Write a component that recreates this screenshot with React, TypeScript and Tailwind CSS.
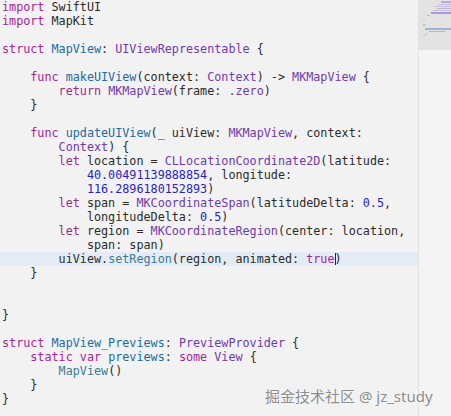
import React from 'react';

type Tok = [string, string?];

const K = 'text-[#a3278f]'; // keywords
const T = 'text-[#6f3bab]'; // types
const D = 'text-[#1e6a9e]'; // declarations
const F = 'text-[#3b7a93]'; // function / member calls
const N = 'text-[#2a1fc4]'; // numbers

const lines: { indent: number; toks: Tok[]; active?: boolean }[] = [
    { indent: 0, toks: [['import', K], [' SwiftUI']] },
    { indent: 0, toks: [['import', K], [' MapKit']] },
    { indent: 0, toks: [] },
    { indent: 0, toks: [['struct', K], [' '], ['MapView', D], [': '], ['UIViewRepresentable', T], [' {']] },
    { indent: 0, toks: [] },
    {
        indent: 4,
        toks: [['func', K], [' '], ['makeUIView', D], ['(context: '], ['Context', T], [') -> '], ['MKMapView', T], [' {']],
    },
    { indent: 8, toks: [['return', K], [' '], ['MKMapView', T], ['(frame: '], ['.zero', T], [')']] },
    { indent: 4, toks: [['}']] },
    { indent: 0, toks: [] },
    {
        indent: 4,
        toks: [['func', K], [' '], ['updateUIView', D], ['(_ uiView: '], ['MKMapView', T], [', context:']],
    },
    { indent: 8, toks: [['Context', T], [') {']] },
    { indent: 8, toks: [['let', K], [' location = '], ['CLLocationCoordinate2D', T], ['(latitude:']] },
    { indent: 12, toks: [['40.00491139888854', N], [', longitude:']] },
    { indent: 12, toks: [['116.2896180152893', N], [')']] },
    { indent: 8, toks: [['let', K], [' span = '], ['MKCoordinateSpan', T], ['(latitudeDelta: '], ['0.5', N], [',']] },
    { indent: 12, toks: [['longitudeDelta: '], ['0.5', N], [')']] },
    { indent: 8, toks: [['let', K], [' region = '], ['MKCoordinateRegion', T], ['(center: location,']] },
    { indent: 12, toks: [['span: span)']] },
    { indent: 8, toks: [['uiView.'], ['setRegion', F], ['(region, animated: '], ['true', K], ['|'], [')']], active: true },
    { indent: 4, toks: [['}']] },
    { indent: 0, toks: [] },
    { indent: 0, toks: [] },
    { indent: 0, toks: [['}']] },
    { indent: 0, toks: [] },
    { indent: 0, toks: [['struct', K], [' '], ['MapView_Previews', D], [': '], ['PreviewProvider', T], [' {']] },
    {
        indent: 4,
        toks: [['static', K], [' '], ['var', K], [' '], ['previews', D], [': '], ['some', K], [' '], ['View', T], [' {']],
    },
    { indent: 8, toks: [['MapView', F], ['()']] },
    { indent: 4, toks: [['}']] },
    { indent: 0, toks: [['}']] },
];

function CodeLine({ indent, toks, active }: { indent: number; toks: Tok[]; active?: boolean }) {
    return (
        <div className={`h-[14px] pl-[2px] whitespace-pre leading-[14px] ${active ? 'bg-[#e4ebf4]' : ''}`}>
            {' '.repeat(indent)}
            {toks.map(([text, cls], i) =>
                text === '|' ? (
                    <span key={i} className="relative inline-block w-0 h-[14px] align-top">
                        <span className="absolute left-0 top-[1px] w-px h-[12px] bg-[#222]" />
                    </span>
                ) : (
                    <span key={i} className={cls ?? ''}>
                        {text}
                    </span>
                )
            )}
        </div>
    );
}

function Minimap() {
    return (
        <div className="w-[33px] border-l border-[#e2e2e2] bg-[#f4f4f4]">
            <div className="h-[50px] bg-[#e3e3e3] flex flex-col gap-[1px] pt-[1px] pl-[4px]">
                <div className="h-[2px] w-[12px] ml-[18px] bg-[#b8a9e3]" />
                <div className="h-[1px] w-[14px] ml-[16px] bg-[#bcbcd0]" />
                <div className="h-[1px] w-[18px] ml-[12px] bg-[#c6c0da]" />
                <div className="h-[1px] w-[16px] ml-[14px] bg-[#bfb9d6]" />
                <div className="h-[1px] w-[20px] ml-[10px] bg-[#c7c2de]" />
                <div className="h-[2px] w-[22px] ml-[8px] bg-[#a99ad8]" />
                <div className="h-[1px] w-[3px] ml-[4px] bg-[#bdbdbd]" />
                <div className="h-[1px] w-[2px] bg-[#c2c2c2] mt-[2px]" />
                <div className="h-[2px] w-[3px] mt-[3px] bg-[#c8c8c8]" />
                <div className="h-[2px] w-[26px] ml-[2px] mt-[1px] bg-[#9fb3d6]" />
                <div className="h-[1px] w-[16px] ml-[6px] bg-[#b9b3cf]" />
                <div className="h-[1px] w-[3px] ml-[2px] bg-[#c4c4c4]" />
                <div className="h-[1px] w-[3px] bg-[#c4c4c4]" />
            </div>
        </div>
    );
}

export default function App() {
    return (
        <div className="relative w-[451px] h-[416px] overflow-hidden bg-[#f2f2f2] flex">
            <div
                className="flex-1 text-[11.75px] text-[#2b2b2b]"
                style={{ fontFamily: '"DejaVu Sans Mono", "Liberation Mono", monospace' }}
            >
                {lines.map((l, i) => (
                    <CodeLine key={i} {...l} />
                ))}
            </div>
            <Minimap />

            {/* watermark */}
            <div
                className="absolute left-[265px] top-[386px] text-[15px] leading-[20px] text-[#8d8d8d] whitespace-pre"
                style={{
                    fontFamily: '"Noto Sans", "Noto Sans CJK SC", sans-serif',
                    textShadow: '0 0 2px #ffffff',
                }}
            >
                掘金技术社区 @ jz_study
            </div>
        </div>
    );
}
